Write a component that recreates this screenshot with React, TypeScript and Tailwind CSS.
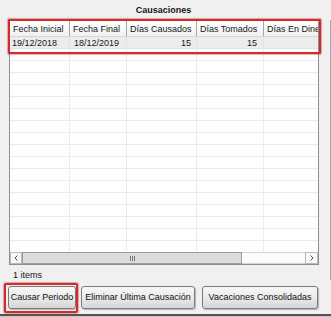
import React from "react";

const cols = [60, 57, 70, 67, 54];
const headers = ["Fecha Inicial", "Fecha Final", "Días Causados", "Días Tomados", "Días En Dinero"];

function EmptyRow() {
  return (
    <div className="flex h-[12px] shrink-0 border-b border-[#ececec] bg-white">
      {cols.map((w, i) => (
        <div
          key={i}
          style={{ width: w }}
          className={i < 4 ? "shrink-0 border-r border-[#ececec]" : "shrink-0"}
        />
      ))}
    </div>
  );
}

function Btn({ children, w }: { children: React.ReactNode; w: string }) {
  return (
    <div
      className={`${w} h-[23px] shrink-0 flex items-center justify-center rounded-[3px] border border-[#7a7a7a] bg-gradient-to-b from-[#f7f7f7] via-[#ebebeb] to-[#d6d6d6] shadow-[1px_1px_1px_rgba(0,0,0,0.25)] text-[#111]`}
    >
      {children}
    </div>
  );
}

export default function App() {
  return (
    <div className="relative w-[331px] h-[317px] overflow-hidden bg-[#f0f0f0] font-['Liberation_Sans',Arial,sans-serif] text-[9px] text-[#161616]">
      {/* title */}
      <div className="w-[327px] h-[20px] flex items-center justify-center font-bold pt-[1px]">Causaciones</div>

      {/* main panel */}
      <div className="w-[331px] h-[260px] border-r border-[#a8a8a8] flex flex-col">
        <div className="ml-[9px] w-[310px] h-[245px] border border-[#8e8f8f] bg-white flex flex-col overflow-hidden">
          {/* header */}
          <div className="flex h-[16px] shrink-0 border-b border-[#d5d5d5] bg-gradient-to-b from-[#ffffff] to-[#f1f1f1]">
            {headers.map((h, i) => (
              <div
                key={i}
                style={{ width: cols[i] }}
                className={`shrink-0 overflow-hidden whitespace-nowrap pl-[3px] pt-[2px] leading-[12px] ${i < 4 ? "border-r border-[#a5a5a5]" : ""}`}
              >
                {h}
              </div>
            ))}
          </div>
          {/* rows */}
          <div className="h-[215px] flex flex-col overflow-hidden">
            <div className="flex h-[12px] shrink-0 border-b border-[#e2e2e2] bg-[#ededed] leading-[12px]">
              <div style={{ width: cols[0] }} className="shrink-0 pl-[2px] border-r border-[#e2e2e2]">19/12/2018</div>
              <div style={{ width: cols[1] }} className="shrink-0 pl-[4px] border-r border-[#e2e2e2]">18/12/2019</div>
              <div style={{ width: cols[2] }} className="shrink-0 pr-[5px] text-right border-r border-[#e2e2e2]">15</div>
              <div style={{ width: cols[3] }} className="shrink-0 pr-[6px] text-right border-r border-[#e2e2e2]">15</div>
              <div style={{ width: cols[4] }} className="shrink-0" />
            </div>
            {Array.from({ length: 17 }).map((_, i) => (
              <EmptyRow key={i} />
            ))}
          </div>
          {/* horizontal scrollbar */}
          <div className="flex h-[12px] shrink-0 bg-[#f5f5f5]">
            <div className="w-[12px] h-[12px] shrink-0 border border-[#b9b9b9] bg-[#fafafa] flex items-center justify-center">
              <svg width="4" height="6" viewBox="0 0 4 6">
                <path d="M3.5 0.5 L1 3 L3.5 5.5" fill="none" stroke="#555" strokeWidth="1" />
              </svg>
            </div>
            <div className="w-[220px] h-[12px] shrink-0 border border-[#9c9c9c] bg-[#dcdcdc] flex items-center justify-center">
              <div className="flex gap-[1px]">
                <div className="w-[1px] h-[5px] bg-[#777]" />
                <div className="w-[1px] h-[5px] bg-[#777]" />
                <div className="w-[1px] h-[5px] bg-[#777]" />
              </div>
            </div>
            <div className="flex-1 h-[12px] border-y border-[#d4d4d4] bg-[#fbfbfb]" />
            <div className="w-[13px] h-[12px] shrink-0 border border-[#b9b9b9] bg-[#fafafa] flex items-center justify-center">
              <svg width="4" height="6" viewBox="0 0 4 6">
                <path d="M0.5 0.5 L3 3 L0.5 5.5" fill="none" stroke="#555" strokeWidth="1" />
              </svg>
            </div>
          </div>
        </div>
        <div className="mt-[5px] pl-[13px] h-[10px] leading-[10px]">1 items</div>
      </div>

      {/* buttons */}
      <div className="flex pt-[6px] h-[34px]">
        <div className="ml-[8px]">
          <Btn w="w-[68px]">Causar Periodo</Btn>
        </div>
        <div className="ml-[5px]">
          <Btn w="w-[114px]">Eliminar Última Causación</Btn>
        </div>
        <div className="ml-[7px]">
          <Btn w="w-[116px]">Vacaciones Consolidadas</Btn>
        </div>
      </div>
      <div className="h-[2px] bg-[#545454]" />
      <div className="h-[1px] bg-[#c8c8c8]" />

      {/* red highlight overlays */}
      <div className="absolute left-[8px] top-[19px] w-[313px] h-[35px] border-[2px] border-[#d22b2b] rounded-[1px] shadow-[0_0_1px_1px_rgba(170,30,30,0.35)] pointer-events-none" />
      <div className="absolute left-[4px] top-[283px] w-[74px] h-[30px] border-[2px] border-[#d22b2b] rounded-[2px] shadow-[0_0_1px_1px_rgba(170,30,30,0.35)] pointer-events-none" />
    </div>
  );
}
